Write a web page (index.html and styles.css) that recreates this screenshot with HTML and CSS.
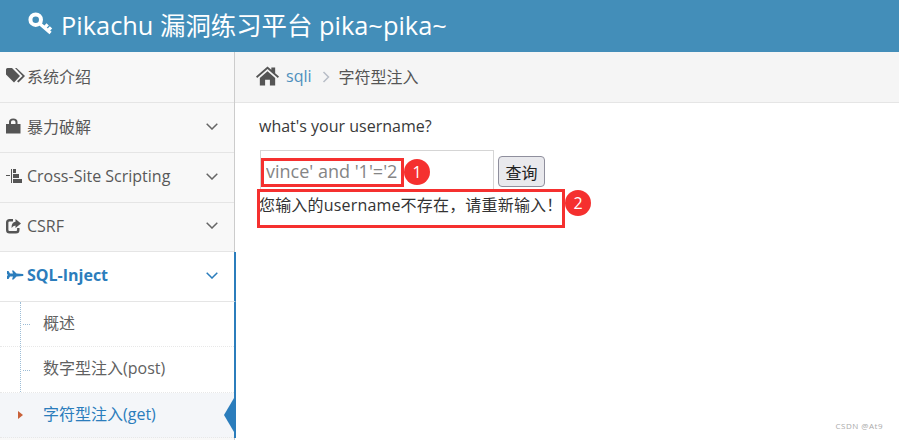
FILE: index.html
```html
<!DOCTYPE html>
<html lang="zh">
    <head>
        <meta charset="UTF-8">
        <title>Pikachu</title>
        <link rel="stylesheet" href="styles.css">
    </head>
    <body>
        <header class="topbar">
            <svg class="logo" viewBox="0 0 26 24"><circle cx="8" cy="8" r="5.500" fill="none" stroke="#fff" stroke-width="4.200"/><path d="M12 12 L23.500 22 M17 16.500 L20.500 13 M20.500 19.500 L24 16" fill="none" stroke="#fff" stroke-width="3.400"/></svg>
            <span>Pikachu 漏洞练习平台 pika~pika~</span>
        </header>
        <div class="layout">
            <nav class="sidebar">
                <a class="item">
                    <svg class="icon" viewBox="0 0 20 16"><path d="M0 1.500 Q0 0 1.500 0 H6 L14 8 L8 14.500 L0 6.500 Z M9 0 H10.500 L19 8 L12.500 14.500 L11 13.300 L16.500 8 Z" fill="#555"/></svg>
                    <span>系统介绍</span>
                </a>
                <a class="item">
                    <svg class="icon" viewBox="0 0 20 16"><path d="M0 6 H14.500 V15.500 H0 Z M3 6 V4 Q3 .5 7.200 .5 Q11.500 .5 11.500 4 V6 H9.500 V4 Q9.500 2.300 7.200 2.300 Q5 2.300 5 4 V6 Z" fill="#555"/></svg>
                    <span>暴力破解</span>
                    <svg class="chevron" viewBox="0 0 12 7"><path d="M.7 .7 L6 6 L11.300 .7" fill="none" stroke="#666" stroke-width="1.500"/></svg>
                </a>
                <a class="item">
                    <svg class="icon" viewBox="0 0 20 16"><path d="M0 7 H4 V8 H0 Z M5 1 H6 V15 H5 Z M7 1 H10 V5 H7 Z M7 6 H13 V10 H7 Z M7 11 H16 V15 H7 Z" fill="#555"/></svg>
                    <span>Cross-Site Scripting</span>
                    <svg class="chevron" viewBox="0 0 12 7"><path d="M.7 .7 L6 6 L11.300 .7" fill="none" stroke="#666" stroke-width="1.500"/></svg>
                </a>
                <a class="item short">
                    <svg class="icon" viewBox="0 0 20 16"><path d="M7 2.200 H3.500 Q1.200 2.200 1.200 4.500 V12 Q1.200 14.300 3.500 14.300 H10 Q12.300 14.300 12.300 12 V10" fill="none" stroke="#555" stroke-width="2.400"/><path d="M9.500 1 L15 5.500 L9.500 10 V7.500 Q7 7.500 5.500 10 Q5.500 4 9.500 3.800 Z" fill="#555"/></svg>
                    <span>CSRF</span>
                    <svg class="chevron" viewBox="0 0 12 7"><path d="M.7 .7 L6 6 L11.300 .7" fill="none" stroke="#666" stroke-width="1.500"/></svg>
                </a>
                <a class="item open">
                    <svg class="icon" viewBox="0 0 20 16"><path d="M1 4 H2.500 L4 6.500 H7 L6 3.500 H7.500 L10.500 6.500 L17 7 Q18 8 17 9 L10.500 9.500 L7.500 12.500 H6 L7 9.500 H4 L2.500 12 H1 V9 L2 8 L1 7 Z" fill="#2b7dbc"/></svg>
                    <span>SQL-Inject</span>
                    <svg class="chevron" viewBox="0 0 12 7"><path d="M.7 .7 L6 6 L11.300 .7" fill="none" stroke="#2b7dbc" stroke-width="1.500"/></svg>
                </a>
                <ul class="submenu">
                    <li class="sub">概述</li>
                    <li class="sub middle">数字型注入(post)</li>
                    <li class="sub current">字符型注入(get)</li>
                </ul>
            </nav>
            <main class="content">
                <div class="crumbs">
                    <svg class="home" viewBox="0 0 24 20"><path d="M0 10.500 L12 0 L16 3.500 V1 H20 V7 L24 10.500 L22.800 12 L12 2.800 L1.200 12 Z M4 12 L12 5 L20 12 V20 H14.500 V14 H9.500 V20 H4 Z" fill="#555"/></svg>
                    <a class="crumb-link">sqli</a>
                    <svg class="crumb-sep" viewBox="0 0 8 12"><path d="M1.500 1 L6.500 6 L1.500 11" fill="none" stroke="#b8bec7" stroke-width="1.500"/></svg>
                    <span class="crumb-now">字符型注入</span>
                </div>
                <div class="page">
                    <p class="question">what's your username?</p>
                    <form class="query">
                        <input class="name" type="text" value="vince' and '1'='2">
                        <button class="submit" type="button">查询</button>
                    </form>
                    <p class="result">您输入的username不存在，请重新输入！</p>
                    <div class="mark mark-one"></div>
                    <div class="badge badge-one">1</div>
                    <div class="mark mark-two"></div>
                    <div class="badge badge-two">2</div>
                </div>
            </main>
        </div>
        <div class="watermark">CSDN @At9</div>
    </body>
</html>
```

FILE: styles.css
```css
* {
    box-sizing: border-box;
}
html, body {
    height: 100%;
}
body {
    margin: 0;
    overflow: hidden;
    background: #fff;
    color: #393939;
    font-family: "Open Sans", "Noto Sans CJK SC", sans-serif;
    font-size: 16px;
}
.topbar {
    display: flex;
    align-items: center;
    gap: 8px;
    height: 52px;
    padding: 0 0 5px 28px;
    background: #438eb9;
    color: #fff;
    font-size: 25.400px;
}
.logo {
    width: 25px;
    height: 23px;
}
.layout {
    display: flex;
    height: 388px;
}
.sidebar {
    width: 235px;
    flex: none;
    padding-top: 1px;
    background: #f8f8f8;
    border-right: 1px solid #ccc;
    position: relative;
    z-index: 1;
}
.item {
    display: flex;
    align-items: center;
    height: 50px;
    padding: 0 16px 3px 6px;
    border-bottom: 1px solid #e5e5e5;
    color: #585858;
}
.short {
    height: 49px;
}
.icon {
    width: 20px;
    height: 16px;
    flex: none;
    margin-right: 1px;
}
.chevron {
    width: 12px;
    height: 7px;
    margin-left: auto;
}
.open {
    background: #fff;
    color: #2b7dbc;
    font-weight: 700;
}
.submenu {
    margin: 0;
    padding: 0;
    list-style: none;
    background: #fff;
    position: relative;
}
.submenu::before {
    content: "";
    position: absolute;
    left: 20px;
    top: 0;
    bottom: 0;
    border-left: 1px dotted #9dbdd6;
}
.sub {
    display: flex;
    align-items: center;
    height: 45px;
    padding: 0 0 4px 43px;
    border-bottom: 1px dotted #e8e8e8;
    color: #616161;
    position: relative;
}
.middle {
    height: 46px;
    padding-bottom: 5px;
}
.sub::before {
    content: "";
    position: absolute;
    left: 23px;
    top: 50%;
    width: 7px;
    border-top: 1px dotted #9dbdd6;
}
.current {
    background: #f4f6f9;
    color: #2b7dbc;
}
.current::before {
    left: 18px;
    width: 0;
    margin-top: -4px;
    border-top: 4px solid transparent;
    border-bottom: 4px solid transparent;
    border-left: 5px solid #c86139;
}
.current::after {
    content: "";
    position: absolute;
    right: 0;
    top: 50%;
    margin-top: -17px;
    border-top: 17px solid transparent;
    border-bottom: 17px solid transparent;
    border-right: 10px solid #2b7dbc;
}
.open, .submenu {
    margin-right: -2px;
    border-right: 2px solid #2b7dbc;
}
.content {
    flex: 1;
}
.crumbs {
    display: flex;
    align-items: center;
    height: 51px;
    padding: 0 0 2px 21px;
    background: #f5f5f5;
    border-bottom: 1px solid #e5e5e5;
}
.home {
    width: 23px;
    height: 20px;
    margin-right: 7px;
}
.crumb-link {
    color: #4c8fbd;
}
.crumb-sep {
    width: 8px;
    height: 12px;
    margin: 2px 9px 0 10px;
}
.crumb-now {
    color: #555;
    font-size: 16px;
}
.page {
    position: relative;
    padding: 0 0 0 24px;
}
.question {
    margin: 0;
    height: 47px;
    padding-top: 12px;
}
.query {
    display: flex;
    align-items: flex-start;
    gap: 4px;
    height: 38px;
    margin-left: 1px;
}
.name {
    width: 234px;
    height: 40px;
    padding: 5px 5px 3px;
    border: 1px solid #d5d5d5;
    color: #858585;
    background: #fff;
    font: inherit;
    font-size: 18px;
}
.submit {
    width: 47px;
    height: 31px;
    margin-top: 6px;
    padding: 0;
    border: 1px solid #8f8f9d;
    border-radius: 4px;
    background: #e9e9ed;
    color: #222;
    font: inherit;
}
.result {
    position: relative;
    margin: 0;
    padding-top: 5px;
    line-height: 24px;
    letter-spacing: .18px;
    color: #333;
}
.mark {
    position: absolute;
    border: 3px solid #f5302f;
}
.mark-one {
    left: 26px;
    top: 55px;
    width: 143px;
    height: 29px;
}
.mark-two {
    left: 22px;
    top: 86px;
    width: 308px;
    height: 39px;
}
.badge {
    position: absolute;
    width: 26px;
    height: 26px;
    border-radius: 50%;
    background: #f5302f;
    color: #fff;
    font-size: 16px;
    line-height: 26px;
    text-align: center;
}
.badge-one {
    left: 169px;
    top: 56px;
}
.badge-two {
    left: 330px;
    top: 87px;
}
.watermark {
    position: absolute;
    right: 16px;
    bottom: 9px;
    color: #aaa;
    font-size: 8px;
    letter-spacing: .5px;
}
```
